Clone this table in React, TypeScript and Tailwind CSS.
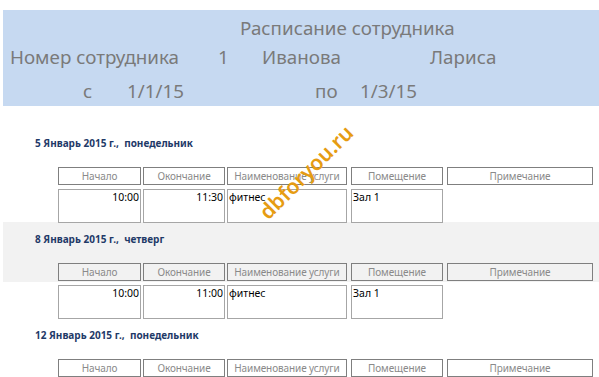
import React from "react";

const cols = [
  { label: "Начало", w: "w-[83px]", gap: "" },
  { label: "Окончание", w: "w-[82px]", gap: "ml-[2px]" },
  { label: "Наименование услуги", w: "w-[120px]", gap: "ml-[2px]" },
  { label: "Помещение", w: "w-[92px]", gap: "ml-[4px]" },
  { label: "Примечание", w: "w-[146px]", gap: "ml-[4px]" },
];

function GroupHeader({ title, gray }: { title: string; gray?: boolean }) {
  return (
    <div className={`ml-[3px] h-[60px] ${gray ? "bg-[#f2f2f2]" : "bg-white"}`}>
      <div className="pl-[32px] pt-[10px] h-[24px] text-[10px] leading-[14px] font-bold text-[#1f3a68] whitespace-pre">
        {title}
      </div>
      <div className="flex ml-[55px] mt-[17px]">
        {cols.map((c) => (
          <div
            key={c.label}
            className={`${c.w} ${c.gap} h-[18px] border border-[#7f7f7f] flex items-center justify-center text-[10px] tracking-[-0.1px] text-[#8a8a8a] whitespace-nowrap overflow-hidden`}
          >
            {c.label}
          </div>
        ))}
      </div>
    </div>
  );
}

function Detail({ start, end }: { start: string; end: string }) {
  const box = "h-[34px] border border-[#a6a6a6] text-[10.5px] leading-[14px] text-black";
  return (
    <div className="ml-[3px] h-[36px] pt-[3px] flex pl-[55px]">
      <div className={`${box} w-[83px] text-right pr-[1px]`}>{start}</div>
      <div className={`${box} w-[82px] ml-[2px] text-right pr-[1px]`}>{end}</div>
      <div className={`${box} w-[120px] ml-[2px] pl-[1px]`}>фитнес</div>
      <div className={`${box} w-[92px] ml-[4px] pl-[1px]`}>Зал 1</div>
    </div>
  );
}

export default function App() {
  return (
    <div className="relative w-[599px] h-[377px] overflow-hidden bg-white font-['Noto_Sans',sans-serif]">
      <div className="h-[10px]" />
      <div className="ml-[3px] h-[96px] bg-[#c6d9f1] text-[18.8px] leading-[24px] text-[#7a7a7a] pt-[6px]">
        <div className="pl-[237px] whitespace-nowrap">Расписание сотрудника</div>
        <div className="flex mt-[5px] pl-[7px] whitespace-nowrap">
          <div className="w-[208px]">Номер сотрудника</div>
          <div className="w-[44px]">1</div>
          <div className="w-[168px]">Иванова</div>
          <div>Лариса</div>
        </div>
        <div className="flex mt-[10px] pl-[80px] whitespace-nowrap">
          <div className="w-[44px]">с</div>
          <div className="w-[188px]">1/1/15</div>
          <div className="w-[45px]">по</div>
          <div>1/3/15</div>
        </div>
      </div>
      <div className="h-[20px]" />
      <GroupHeader title={"5 Январь 2015 г.,  понедельник"} />
      <Detail start="10:00" end="11:30" />
      <GroupHeader title={"8 Январь 2015 г.,  четверг"} gray />
      <Detail start="10:00" end="11:00" />
      <GroupHeader title={"12 Январь 2015 г.,  понедельник"} />
      <div className="absolute left-[263px] top-[205px] -rotate-45 origin-left text-[21px] font-semibold text-[#e69c12] leading-none">
        dbforyou.ru
      </div>
    </div>
  );
}
